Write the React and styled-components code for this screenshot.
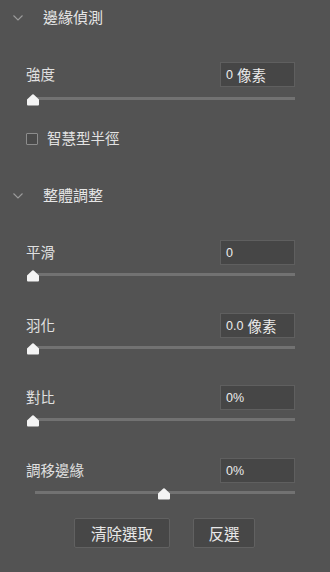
import React from 'react';
import styled, { createGlobalStyle } from 'styled-components';

const GlobalStyle = createGlobalStyle`
    html, body {
        margin: 0;
        padding: 0;
        background: #535353;
    }
    body {
        font-family: "Liberation Sans", "Noto Sans CJK TC", sans-serif;
        color: #e2e2e2;
    }
`;

const Panel = styled.div`
    width: 330px;
    height: 572px;
    background: #535353;
    display: flex;
    flex-direction: column;
    overflow: hidden;
`;

const Header = styled.div`
    display: flex;
    align-items: center;
    height: 36px;
    margin-top: ${props => props.$top || 0}px;
    padding-left: 13px;
`;

const HeaderTitle = styled.span`
    margin-left: 20px;
    font-size: 15px;
    line-height: 20px;
    color: #e6e6e6;
`;

const Body = styled.div`
    display: flex;
    flex-direction: column;
    padding: 0 35px 0 26px;
`;

const Field = styled.div`
    display: flex;
    flex-direction: column;
    margin-top: ${props => props.$top}px;
`;

const Row = styled.div`
    display: flex;
    align-items: center;
    justify-content: space-between;
    height: 25px;
`;

const Label = styled.span`
    font-size: 14.5px;
    line-height: 18px;
    color: #e0e0e0;
`;

const Input = styled.div`
    box-sizing: border-box;
    width: 75px;
    height: 25px;
    background: #464646;
    border: 1px solid #5f5f5f;
    display: flex;
    align-items: center;
    padding-left: 5px;
    font-size: 12.5px;
    color: #ececec;
    gap: 4px;
`;

const Unit = styled.span`
    font-size: 14.5px;
`;

const Slider = styled.div`
    position: relative;
    height: 18px;
`;

const Track = styled.div`
    margin-top: ${props => props.$offset}px;
    margin-left: ${props => props.$start}px;
    height: 3px;
    background: #727272;
`;

const Thumb = styled.svg`
    position: absolute;
    top: ${props => props.$offset - 3}px;
`;

const CheckRow = styled.label`
    display: flex;
    align-items: center;
    height: 20px;
    margin-top: 24px;
`;

const Box = styled.span`
    box-sizing: border-box;
    width: 12px;
    height: 12px;
    border: 1px solid #8c8c8c;
    background: #4a4a4a;
    border-radius: 1px;
    margin-right: 9px;
`;

const CheckText = styled.span`
    font-size: 14.5px;
    line-height: 18px;
    color: #e2e2e2;
`;

const Buttons = styled.div`
    display: flex;
    justify-content: center;
    gap: 23px;
    margin-top: 17px;
    padding-left: 8px;
`;

const Button = styled.button`
    box-sizing: border-box;
    width: ${props => props.$w}px;
    height: 30px;
    background: #474747;
    border: 1px solid #616161;
    border-radius: 2px;
    color: #e8e8e8;
    font-family: "Liberation Sans", "Noto Sans CJK TC", sans-serif;
    font-size: 15.5px;
    padding: 0;
    cursor: pointer;
`;

const Chevron = () => (
    <svg width="10" height="6" viewBox="0 0 10 6">
        <path d="M0.5 0.5 L5 5 L9.5 0.5" fill="none" stroke="#9c9c9c" strokeWidth="1.1" />
    </svg>
);

const SliderBar = ({ value, offset = 8, start = 7 }) => (
    <Slider>
        <Track $offset={offset} $start={start} />
        <Thumb $offset={offset} width="14" height="12" viewBox="0 0 14 12" style={{ left: `${value * 262}px` }}>
            <path d="M1 5.5 L6.3 0.6 Q7 0 7.7 0.6 L13 5.5 L13 10.5 Q13 11.5 12 11.5 L2 11.5 Q1 11.5 1 10.5 Z" fill="#f4f4f4" />
        </Thumb>
    </Slider>
);

const fields = [
    { label: '平滑', value: '0', top: 26, pos: 0 },
    { label: '羽化', value: '0.0', unit: '像素', top: 30, pos: 0 },
    { label: '對比', value: '0%', top: 29, pos: 0 },
    { label: '調移邊緣', value: '0%', top: 30, pos: 0.5, start: 9 },
];

const App = () => {
    return (
        <>
            <GlobalStyle />
            <Panel>
                <Header>
                    <Chevron />
                    <HeaderTitle>邊緣偵測</HeaderTitle>
                </Header>
                <Body>
                    <Field $top={26}>
                        <Row>
                            <Label>強度</Label>
                            <Input>0 <Unit>像素</Unit></Input>
                        </Row>
                        <SliderBar value={0} offset={10} />
                    </Field>
                    <CheckRow>
                        <Box />
                        <CheckText>智慧型半徑</CheckText>
                    </CheckRow>
                </Body>
                <Header $top={29}>
                    <Chevron />
                    <HeaderTitle>整體調整</HeaderTitle>
                </Header>
                <Body>
                    {fields.map((f, i) => (
                        <Field key={i} $top={f.top}>
                            <Row>
                                <Label>{f.label}</Label>
                                <Input>{f.value}{f.unit && <Unit>{f.unit}</Unit>}</Input>
                            </Row>
                            <SliderBar value={f.pos} start={f.start} />
                        </Field>
                    ))}
                    <Buttons>
                        <Button $w={96}>清除選取</Button>
                        <Button $w={62}>反選</Button>
                    </Buttons>
                </Body>
            </Panel>
        </>
    );
};

export default App;
